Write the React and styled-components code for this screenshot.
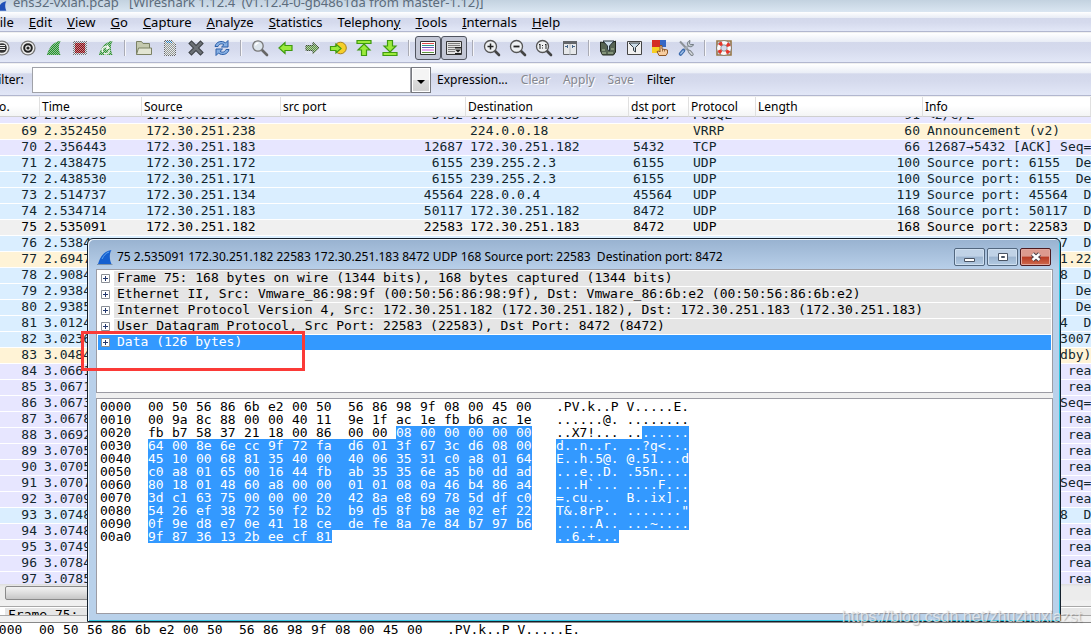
import styled, { createGlobalStyle, css } from "styled-components";

const ui = `"Noto Sans", "Open Sans", sans-serif`;
const mono = `"DejaVu Sans Mono", "Liberation Mono", monospace`;

const GlobalStyle = createGlobalStyle`
  * {
    box-sizing: border-box;
  }
  body {
    margin: 0;
    font-family: ${ui};
    font-size: 12px;
    color: #000;
  }
  button, input {
    font: inherit;
    color: inherit;
  }
`;

const Desktop = styled.div`
  position: relative;
  height: 100vh;
  overflow: hidden;
`;
const Defs = styled.svg`
  display: block;
`;
/* the main window hangs a little over the left screen edge */
const MainWindow = styled.div`
  display: flex;
  flex-direction: column;
  height: 100%;
  margin-left: -12px;
  background: #f0f0f0;
`;
const TitleBar = styled.header`
  display: flex;
  align-items: flex-end;
  gap: 5px;
  height: 12px;
  padding-left: 8px;
  flex: none;
  overflow: hidden;
  color: #5c6c7c;
  font-size: 13px;
  line-height: 20px;
  white-space: pre;
  background: linear-gradient(#c3d2e0, #dae6f2);
`;
const strip = css`
  display: flex;
  align-items: center;
  flex: none;
  margin-bottom: 1px;
  border-bottom: 1px solid #b2b7cf;
  background: linear-gradient(
    #fff 0%,
    #e9edf6 30%,
    #d3d8eb 31%,
    #d5daed 55%,
    #e2e7f7 100%
  );
`;
const MenuBar = styled.nav`
  ${strip}
  gap: 15px;
  height: 20px;
  padding-left: 5px;
`;
const MenuItem = styled.button`
  padding: 0;
  border: 0;
  background: none;
  font-size: 13px;
  line-height: 18px;
`;
const ToolBar = styled.div`
  ${strip}
  height: 30px;
  padding: 1px 0 0 1px;
`;
const ToolButton = styled.button`
  display: flex;
  align-items: center;
  justify-content: center;
  width: 26px;
  height: 24px;
  flex: none;
  padding: 0;
  border: 1px solid ${(p) => (p.$on ? "#50545f" : "transparent")};
  border-radius: 3px;
  background: ${(p) => (p.$on ? "#c3c7d6" : "none")};
`;
const Separator = styled.div`
  width: 1px;
  height: 16px;
  margin: 0 6px 0 5px;
  background: #a9abb5;
  box-shadow: 1px 0 #f6f6fa;
`;
const FilterBar = styled.div`
  ${strip}
  height: 32px;
  padding-left: 4px;
`;
const FilterLabel = styled.label`
  width: 40px;
`;
const ComboBox = styled.div`
  display: flex;
  width: 399px;
  height: 26px;
  margin-right: 6px;
`;
const FilterInput = styled.input`
  flex: 1;
  min-width: 0;
  border: 1px solid #a0a2a8;
  background: #fff;
`;
const DropButton = styled.button`
  width: 20px;
  padding: 0;
  border: 1px solid #77797f;
  box-shadow: inset 0 0 0 1px #fff;
  background: linear-gradient(#f4f4f4 50%, #dcdcdc 51%, #d0d0d0);
`;
const FilterButton = styled.button`
  margin-right: 13px;
  padding: 0;
  border: 0;
  background: none;
  &:disabled {
    color: #85878f;
    text-shadow: 1px 1px #fff;
  }
`;

const PacketPane = styled.main`
  flex: 1;
  min-height: 0;
  overflow: hidden;
  background: #fff;
`;
const PacketTable = styled.table`
  width: 100%;
  table-layout: fixed;
  border-collapse: separate;
  border-spacing: 0;
  font-family: ${mono};
  font-size: 13px;
  line-height: 14px;
`;
const Col = styled.col`
  width: ${(p) => (p.$w ? p.$w + "px" : "auto")};
`;
const HeadCell = styled.th`
  height: 20px;
  padding: 0 0 0 2px;
  overflow: hidden;
  border-right: 1px solid #e0e0e0;
  border-bottom: 1px solid #cfcfcf;
  background: linear-gradient(#fff 45%, #f3f4f5);
  font-family: ${ui};
  font-size: 12px;
  font-weight: 400;
  line-height: 19px;
  text-align: left;
`;
const rowColors = {
  udp: "#daeeff",
  tcp: "#e7e6ff",
  arp: "#fff3d6",
  current: "#f0f0f0",
};
const PacketRow = styled.tr`
  background: ${(p) => rowColors[p.$kind]};
  color: ${(p) => (p.$kind === "current" ? "#000" : "#12272e")};
`;
const Cell = styled.td`
  padding: 0 3px 0 4px;
  overflow: hidden;
  border-bottom: 1px solid #fff;
  white-space: pre;
  &:last-child {
    padding-right: 0;
  }
`;
const CellText = styled.div`
  display: flex;
  align-items: flex-end;
  justify-content: ${(p) => (p.$right ? "flex-end" : "flex-start")};
  height: ${(p) => (p.$clipped ? "6px" : "15px")};
  padding-bottom: 1px;
  overflow: hidden;
`;
const ScrollStrip = styled.div`
  height: 22px;
  flex: none;
  padding: 2px 40px 5px 17px;
  background: linear-gradient(#dedede, #ececec 3px, #ececec 16px, #f0f0f0 17px);
`;
const ScrollThumb = styled.div`
  height: 14px;
  border: 1px solid #8a8a8a;
  border-radius: 2px;
  background: linear-gradient(#f2f2f2, #dedede 50%, #c6c6c6);
`;
const MainTree = styled.section`
  height: 10px;
  flex: none;
  padding: 1px 0 0 17px;
  overflow: hidden;
  border: solid #a8a8a8;
  border-width: 1px 0;
  background: #fff;
  font-family: ${mono};
  font-size: 13px;
  line-height: 14px;
`;
const MainTreeRow = styled.div`
  padding-left: 3px;
  background: #e6e6e6;
`;
const MainHex = styled.section`
  height: 13px;
  flex: none;
  margin-top: 6px;
  padding-left: 3px;
  border-top: 1px solid #888;
  background: #fff;
`;

const Dialog = styled.section`
  position: absolute;
  top: 238px;
  left: 87px;
  right: 30px;
  padding: 1px 7px 7px 8px;
  border: 1px solid #14202c;
  border-radius: 6px 6px 0 0;
  box-shadow: inset 1px 1px #eef5fc, inset -1px -1px #2fc6e0;
  background: linear-gradient(#98b2d0, #b9d0ea 31px, #b9d1ea);
`;
const DialogTitle = styled.header`
  display: flex;
  align-items: center;
  gap: 3px;
  height: 29px;
  padding-top: 4px;
`;
const DialogName = styled.h1`
  flex: 1;
  margin: 0;
  font-size: 12px;
  font-weight: 400;
  white-space: pre;
`;
const WindowButtons = styled.div`
  display: flex;
  gap: 2px;
  padding-right: 2px;
`;
const WindowButton = styled.button`
  display: flex;
  align-items: center;
  justify-content: center;
  width: 31px;
  height: 18px;
  padding: 0;
  border: 1px solid ${(p) => (p.$close ? "#4d1a20" : "#52677f")};
  border-radius: 2px;
  box-shadow: inset 0 0 0 1px ${(p) => (p.$close ? "#e2a79d" : "#cfdff0")};
  background: ${(p) =>
    p.$close
      ? "linear-gradient(#dc9a8e 45%, #b83a22 50%, #cf6a4e)"
      : "linear-gradient(#c0d2e6 45%, #9cb4cf 50%, #b3cae2)"};
`;
const Panes = styled.div`
  display: grid;
  gap: 5px;
  background: #f0f0f0;
`;
const Tree = styled.ul`
  min-height: 124px;
  margin: 0;
  padding: 1px;
  list-style: none;
  border: 1px solid #9c9ca4;
  background: #fff;
  font-family: ${mono};
  font-size: 13px;
  line-height: 14px;
  white-space: pre;
`;
const TreeItem = styled.li`
  display: flex;
  align-items: center;
  border-bottom: 1px solid #fff;
  color: ${(p) => (p.$selected ? "#fff" : "#000")};
  background: ${(p) => (p.$selected ? "#3399ff" : "#fff")};
`;
const Expander = styled.button`
  display: flex;
  margin: 0 4px 0 3px;
  padding: 0;
  border: 0;
  background: none;
`;
const TreeText = styled.span`
  flex: 1;
  padding: 0 0 1px 3px;
  background: ${(p) => (p.$selected ? "#3399ff" : "#e5e5e5")};
`;
const HexPane = styled.div`
  min-height: 216px;
  padding: 1px 3px;
  border: 1px solid #9c9ca4;
  background: #fff;
`;
const HexLine = styled.div`
  display: grid;
  grid-template-columns: 48px 408px 1fr;
  height: 13px;
  font-family: ${mono};
  font-size: 13px;
  line-height: 13px;
  white-space: pre;
`;
const Bytes = styled.div`
  display: flex;
`;
const marked = css`
  color: #fff;
  background: #3399ff;
`;
const Byte = styled.span`
  width: 24px;
  ${(p) => p.$marked && marked}
  &:nth-child(8) {
    width: 32px;
  }
  &:last-child {
    width: 16px;
  }
`;
const Ascii = styled.div`
  display: flex;
`;
const AsciiPart = styled.span`
  ${(p) => p.$marked && marked}
`;
const Highlight = styled.div`
  position: absolute;
  top: 331px;
  left: 81px;
  width: 224px;
  height: 40px;
  border: 3px solid #fb3a37;
`;
const Watermark = styled.div`
  position: absolute;
  right: 9px;
  bottom: 9px;
  color: rgba(240, 240, 240, 0.75);
  font-family: "Liberation Sans", Arial, sans-serif;
  font-size: 16px;
  line-height: 18px;
  text-shadow: 1px 1px 1px rgba(90, 90, 90, 0.4);
`;

const Svg = ({ children, size = 18 }) => (
  <svg width={size} height={size} viewBox="0 0 18 18" aria-hidden="true">
    {children}
  </svg>
);

const Lens = ({ children }) => (
  <Svg>
    <path d="M12 12l4 4" stroke="#444" strokeWidth="2.6" strokeLinecap="round" />
    <circle cx="7.5" cy="7.5" r="6" fill="#eef0f2" stroke="#555" strokeWidth="1.3" />
    {children}
  </Svg>
);

const Circle = ({ children }) => (
  <Svg>
    <circle cx="9" cy="9" r="7.6" fill="#777" />
    <circle cx="9" cy="9" r="6.3" fill="#eee" />
    {children}
  </Svg>
);

const fin = "M2 16C4 9 8 3 15.5 2C13 6 13.5 12 15.5 16Z";
const arrow = "M2 9l6-5.5v3h7v5H8v3z";
const green = { fill: "#9bea3c", stroke: "#3f9a10", strokeWidth: 1.2 };

const icons = {
  interfaces: (
    <Circle>
      <circle cx="9" cy="9" r="4.8" fill="#333" />
      <path d="M6 6.5h6M6 8.5h6M6 10.5h6" stroke="#eee" />
    </Circle>
  ),
  options: (
    <Circle>
      <circle cx="9" cy="9" r="3.8" fill="#eee" stroke="#222" strokeWidth="2" />
      <circle cx="9" cy="9" r="1.6" fill="#222" />
    </Circle>
  ),
  start: (
    <Svg>
      <path d={fin} fill="#1f8a24" />
      <path d={fin} fill="url(#dither)" />
      <path d={fin} fill="#2c9a30" opacity=".45" />
    </Svg>
  ),
  stop: (
    <Svg>
      <path d="M2 2h14v14H2z" fill="#777" />
      <path d="M4 4h10v10H4z" fill="#930d12" />
      <path d="M2 2h14v14H2z" fill="url(#dither)" />
      <path d="M4 4h10v10H4z" fill="#930d12" opacity=".45" />
    </Svg>
  ),
  restart: (
    <Svg>
      <path d={fin} fill="#2f8a30" />
      <path d={fin} fill="url(#dither)" />
      <path d={fin} fill="#2c9a30" opacity=".4" />
      <path d="M6 13a3 3 0 0 1 5-4M12 11a3 3 0 0 1-5 3M10 6l2 3-3 1" fill="none" stroke="#f2f5f0" strokeWidth="1.4" />
    </Svg>
  ),
  open: (
    <Svg>
      <path d="M1.5 15.5v-13h5l1.5 2h6.5v5" fill="#c4c9ae" stroke="#7b8164" />
      <path d="M1.5 15.5l2-6.5h13v6.5z" fill="#e2e5d3" stroke="#7b8164" />
    </Svg>
  ),
  save: (
    <Svg>
      <path d="M3.5 1.5h8l3 3v12h-11z" fill="#989c8e" stroke="#666" />
      <path d="M5 3h6" stroke="#2480b8" strokeWidth="2" />
      <path d="M3 1h12v16H3z" fill="url(#dither)" />
    </Svg>
  ),
  close: (
    <Svg>
      <path d="M4.5 4.5l9 9M13.5 4.5l-9 9" stroke="#3e4247" strokeWidth="4.6" strokeLinecap="square" />
      <path d="M4.5 4.5l9 9M13.5 4.5l-9 9" stroke="#6b7075" strokeWidth="2.6" strokeLinecap="square" />
    </Svg>
  ),
  reload: (
    <Svg>
      <path d="M2 7.5c1-5 7-6.5 10.5-3.5L15 1.5V8H8.500L11 5.7C8.5 4 6 5 5 7.5zM16 10.5c-1 5-7 6.5-10.5 3.5L3 16.5V10h6.5L7 12.3c2.5 1.7 5 .7 6-1.8z" fill="#85aee2" stroke="#2c5fa8" />
    </Svg>
  ),
  find: (
    <Svg>
      <path d="M11 11l5 5" stroke="#666" strokeWidth="2.6" strokeLinecap="round" />
      <circle cx="7" cy="7" r="5.2" fill="#dde5ec" stroke="#777" strokeWidth="1.3" />
      <path d="M4.5 6.5a3 3 0 0 1 3-2.5" stroke="#fff" fill="none" strokeWidth="1.5" />
    </Svg>
  ),
  back: (
    <Svg>
      <path d={arrow} {...green} />
    </Svg>
  ),
  forward: (
    <Svg>
      <path d="M16 9l-6-5.5v3H3v5h7v3z" fill="#4f8a2c" stroke="#3c5232" />
      <path d="M2 3h15v12H2z" fill="url(#dither)" />
      <path d="M16 9l-6-5.5v3H3v5h7v3z" fill="#6fa350" stroke="#3c5232" opacity=".4" />
    </Svg>
  ),
  goto: (
    <Svg>
      <circle cx="11.5" cy="9" r="5.8" fill="#f5cf2a" stroke="#a98218" />
      <path d="M12 9.5L7 5v2.5H1.5v4H7V14z" {...green} />
    </Svg>
  ),
  first: (
    <Svg>
      <path d="M2 1.5h14v3H2zM9 5l6 6h-3.5v5.5h-5V11H3z" {...green} />
    </Svg>
  ),
  last: (
    <Svg>
      <path d="M2 13.5h14v3H2zM9 13l6-6h-3.5V1.5h-5V7H3z" {...green} />
    </Svg>
  ),
  colorize: (
    <Svg>
      <path d="M1.5 2.5h15v13h-15z" fill="#fff" stroke="#333" />
      <path d="M3 4.5h12" stroke="#dd4a4a" />
      <path d="M3 6.5h12" stroke="#2f958e" />
      <path d="M3 8.5h12" stroke="#6a5ab8" />
      <path d="M3 11h12" stroke="#e8a9ed" strokeWidth="2" />
      <path d="M3 13.5h12" stroke="#5f9440" />
    </Svg>
  ),
  autoscroll: (
    <Svg>
      <path d="M1.5 2.5h15v13h-15z" fill="#e2e2e2" stroke="#333" />
      <path d="M3 4.5h12M3 6.5h12M3 8.5h12M3 10.5h7M3 12.5h7" stroke="#7b7b7b" />
      <path d="M10 8h6v1.5h-6zM10 10.5h6l-3 3zM10 14h6v1.5h-6z" fill="#222" />
    </Svg>
  ),
  zoomIn: (
    <Lens>
      <path d="M4.5 7.5h6M7.5 4.5v6" stroke="#222" strokeWidth="1.5" />
    </Lens>
  ),
  zoomOut: (
    <Lens>
      <path d="M4.5 7.5h6" stroke="#222" strokeWidth="1.8" />
    </Lens>
  ),
  zoomReset: (
    <Lens>
      <path d="M4 6l1-1v5M10 6l1-1v5M7.5 6v1M7.5 8.5v1" stroke="#222" fill="none" />
    </Lens>
  ),
  resize: (
    <Svg>
      <path d="M2.5 2.5h13v13h-13z" fill="#e6e8ea" stroke="#63666a" />
      <path d="M2 3.5h14" stroke="#63666a" strokeWidth="3" />
      <path d="M9 5v11" stroke="#b6bbc0" />
      <path d="M4 7.5h3M11 7.5h3M6.5 6v3M11.5 6v3" stroke="#456589" />
    </Svg>
  ),
  capFilter: (
    <Svg>
      <path d="M1.5 3l5 1h6l4-2v11l-2 3h-11l-2-4z" fill="#566453" stroke="#22281f" />
      <path d="M3 14h4M9 14h5M3 11h3M12 10h3" stroke="#93a286" strokeWidth="1.5" />
      <path d="M4 2h11L10.5 7v5l-2-1.500V7z" fill="#cbdce9" stroke="#29343d" />
    </Svg>
  ),
  dispFilter: (
    <Svg>
      <path d="M2.5 2.5h14v13h-14z" fill="#f0f0f0" stroke="#444" />
      <path d="M4 4h11L10.5 8.5v4.5l-2-1.5v-3z" fill="#cbdce9" stroke="#30383f" />
    </Svg>
  ),
  colorRules: (
    <Svg>
      <path d="M1 1h8v7H1z" fill="#d42c24" />
      <path d="M9 1h6v7H9z" fill="#3567c5" />
      <path d="M1 8h8v6H1z" fill="#f6cf24" />
      <path d="M8 16.5l-2-4 2-.5 1 1V6.5h2V10l5.5 1v3l-1.5 2.500z" fill="#f7cda0" stroke="#8d5727" />
      <path d="M11.5 10v2.5M13.5 10.5v2" stroke="#8d5727" strokeWidth=".8" />
    </Svg>
  ),
  prefs: (
    <Svg>
      <path d="M3 2.5l8.5 9" stroke="#8c9298" strokeWidth="2" />
      <path d="M12.5 12.5l2.5 2.8" stroke="#80868c" strokeWidth="3.4" strokeLinecap="round" />
      <path d="M12.5 12.5l2.5 2.8" stroke="#d5dade" strokeWidth="1.4" strokeLinecap="round" />
      <path d="M12 6L5 13" stroke="#a4acb3" strokeWidth="2" />
      <path d="M13 1.5c-2 .5-3.5 3-2 5s5 1.5 5.5-1l-3 .2-1-1.4z" fill="#c6ced4" stroke="#6e777e" />
      <path d="M6.5 11.5L3.5 15" stroke="#3a69ad" strokeWidth="3.6" strokeLinecap="round" />
      <path d="M6.2 12L3.8 14.7" stroke="#9cbde6" strokeWidth="1.5" strokeLinecap="round" />
    </Svg>
  ),
  help: (
    <Svg>
      <path d="M2 2h14v14H2z" fill="none" stroke="#967748" strokeWidth="1.6" />
      <circle cx="9" cy="9" r="5.2" fill="none" stroke="#777" strokeWidth="4.8" />
      <circle cx="9" cy="9" r="5.2" fill="none" stroke="#fafafa" strokeWidth="3.6" />
      <circle cx="9" cy="9" r="5.2" fill="none" stroke="#e5352b" strokeWidth="3.6" strokeDasharray="3.2 4.968" strokeDashoffset="-2.484" />
    </Svg>
  ),
};

const toolGroups = [
  ["interfaces", "options", "start", "stop", "restart"],
  ["open", "save", "close", "reload"],
  ["find", "back", "forward", "goto", "first", "last"],
  ["colorize", "autoscroll"],
  ["zoomIn", "zoomOut", "zoomReset", "resize"],
  ["capFilter", "dispFilter", "colorRules", "prefs"],
  ["help"],
];
const pressed = ["colorize", "autoscroll"];

/* [text, index of the underlined letter] */
const menus = [
  ["File", 0],
  ["Edit", 0],
  ["View", 0],
  ["Go", 0],
  ["Capture", 0],
  ["Analyze", 0],
  ["Statistics", 0],
  ["Telephony", 8],
  ["Tools", 0],
  ["Internals", 0],
  ["Help", 0],
];

const columns = [
  ["No.", 52],
  ["Time", 102],
  ["Source", 139],
  ["src port", 185],
  ["Destination", 163],
  ["dst port", 60],
  ["Protocol", 67],
  ["Length", 167],
  ["Info"],
];
const rightAligned = [0, 3, 7];

const udp = (port) => `Source port: ${port}  Destination port: 8472`;
const seg = "[TCP segment of a reassembled PDU]";
const ack = "5432→12687 [ACK] Seq=";
const A = "172.30.251.182";
const B = "172.30.251.183";
/* rows that only have a number, a time and an info text */
const brief = (kind, no, time, info) => [kind, no, time, "", "", "", "", "", "", info];

const packets = [
  ["tcp", 68, "2.316996", A, "5432", B, "12687", "PGSQL", 91, "<2/C/Z"],
  ["arp", 69, "2.352450", "172.30.251.238", "", "224.0.0.18", "", "VRRP", 60, "Announcement (v2)"],
  ["tcp", 70, "2.356443", B, "12687", A, "5432", "TCP", 66, "12687→5432 [ACK] Seq="],
  ["udp", 71, "2.438475", "172.30.251.172", "6155", "239.255.2.3", "6155", "UDP", 100, udp(6155)],
  ["udp", 72, "2.438530", "172.30.251.171", "6155", "239.255.2.3", "6155", "UDP", 100, udp(6155)],
  ["udp", 73, "2.514737", "172.30.251.134", "45564", "228.0.0.4", "45564", "UDP", 119, udp(45564)],
  ["udp", 74, "2.534714", B, "50117", A, "8472", "UDP", 168, udp(50117)],
  ["current", 75, "2.535091", A, "22583", B, "8472", "UDP", 168, udp(22583)],
  brief("udp", 76, "2.5384", udp(50117)),
  brief("arp", 77, "2.6947", "Who has 172.30.251.22"),
  brief("udp", 78, "2.9084", udp(37498)),
  brief("udp", 79, "2.9384", udp(6155)),
  brief("udp", 80, "2.9385", udp(6155)),
  brief("udp", 81, "3.0124", udp(45564)),
  brief("udp", 82, "3.0236", "Standard query: 23007"),
  brief("arp", 83, "3.0484", "Hello (state Standby)"),
  brief("tcp", 84, "3.0661", seg),
  brief("tcp", 85, "3.0671", seg),
  brief("tcp", 86, "3.0673", ack),
  brief("tcp", 87, "3.0678", seg),
  brief("tcp", 88, "3.0692", seg),
  brief("tcp", 89, "3.0705", seg),
  brief("tcp", 90, "3.0705", seg),
  brief("tcp", 91, "3.0707", ack),
  brief("tcp", 92, "3.0709", seg),
  brief("udp", 93, "3.0748", udp(37498)),
  brief("tcp", 94, "3.0748", seg),
  brief("tcp", 95, "3.0749", seg),
  brief("tcp", 96, "3.0784", seg),
  brief("tcp", 97, "3.0785", seg),
];

const layers = [
  "Frame 75: 168 bytes on wire (1344 bits), 168 bytes captured (1344 bits)",
  "Ethernet II, Src: Vmware_86:98:9f (00:50:56:86:98:9f), Dst: Vmware_86:6b:e2 (00:50:56:86:6b:e2)",
  "Internet Protocol Version 4, Src: 172.30.251.182 (172.30.251.182), Dst: 172.30.251.183 (172.30.251.183)",
  "User Datagram Protocol, Src Port: 22583 (22583), Dst Port: 8472 (8472)",
  "Data (126 bytes)",
];

/* the Data layer starts at this byte of the frame */
const dataStart = 42;
const dump = [
  ["0000", "00 50 56 86 6b e2 00 50 56 86 98 9f 08 00 45 00", ".PV.k..P V.....E."],
  ["0010", "00 9a 8c 88 00 00 40 11 9e 1f ac 1e fb b6 ac 1e", "......@. ........"],
  ["0020", "fb b7 58 37 21 18 00 86 00 00 08 00 00 00 00 00", "..X7!... ........"],
  ["0030", "64 00 8e 6e cc 9f 72 fa d6 01 3f 67 3c d6 08 00", "d..n..r. ..?g<..."],
  ["0040", "45 10 00 68 81 35 40 00 40 06 35 31 c0 a8 01 64", "E..h.5@. @.51...d"],
  ["0050", "c0 a8 01 65 00 16 44 fb ab 35 35 6e a5 b0 dd ad", "...e..D. .55n...."],
  ["0060", "80 18 01 48 60 a8 00 00 01 01 08 0a 46 b4 86 a4", "...H`... ....F..."],
  ["0070", "3d c1 63 75 00 00 00 20 42 8a e8 69 78 5d df c0", "=.cu...  B..ix].."],
  ["0080", "54 26 ef 38 72 50 f2 b2 b9 d5 8f b8 ae 02 ef 22", 'T&.8rP.. ......."'],
  ["0090", "0f 9e d8 e7 0e 41 18 ce de fe 8a 7e 84 b7 97 b6", ".....A.. ...~...."],
  ["00a0", "9f 87 36 13 2b ee cf 81", "..6.+..."],
];

const Menu = ({ text, at }) => (
  <MenuItem type="button">
    {text.slice(0, at)}
    <u>{text[at]}</u>
    {text.slice(at + 1)}
  </MenuItem>
);

const Packet = ({ packet, clipped }) => {
  const [kind, ...cells] = packet;
  return (
    <PacketRow $kind={kind}>
      {cells.map((value, i) => (
        <Cell key={i}>
          <CellText $right={rightAligned.includes(i)} $clipped={clipped}>
            {value}
          </CellText>
        </Cell>
      ))}
    </PacketRow>
  );
};

const HexRow = ({ row, markFrom = Infinity }) => {
  const [offset, hex, ascii] = row;
  const first = parseInt(offset, 16);
  /* bytes of this row before the marked range, and their ascii length */
  const plain = Math.max(0, Math.min(16, markFrom - first));
  const split = plain > 7 ? plain + 1 : plain;
  return (
    <HexLine>
      <span>{offset}</span>
      <Bytes>
        {hex.split(" ").map((byte, i) => (
          <Byte key={i} $marked={i >= plain}>
            {byte}
          </Byte>
        ))}
      </Bytes>
      <Ascii>
        <AsciiPart>{ascii.slice(0, split)}</AsciiPart>
        <AsciiPart $marked>{ascii.slice(split)}</AsciiPart>
      </Ascii>
    </HexLine>
  );
};

const App = () => {
  return (
    <Desktop>
      <GlobalStyle />
      <Defs width="0" height="0">
        <defs>
          <pattern id="dither" width="2" height="2" patternUnits="userSpaceOnUse">
            <path d="M0 0h1v1H0zM1 1h1v1H1z" fill="#e4e7f2" />
          </pattern>
        </defs>
      </Defs>
      <MainWindow>
        <TitleBar>
          <Svg size={12}>
            <path d={fin} fill="#1f50b8" />
          </Svg>
          <span>
            ens32-vxlan.pcap   [Wireshark 1.12.4  (v1.12.4-0-gb4861da from
            master-1.12)]
          </span>
        </TitleBar>
        <MenuBar>
          {menus.map(([text, at]) => (
            <Menu key={text} text={text} at={at} />
          ))}
        </MenuBar>
        <ToolBar>
          {toolGroups.map((group, i) => [
            i > 0 && <Separator key={"sep" + i} />,
            ...group.map((name) => (
              <ToolButton key={name} type="button" aria-label={name} $on={pressed.includes(name)}>
                {icons[name]}
              </ToolButton>
            )),
          ])}
        </ToolBar>
        <FilterBar>
          <FilterLabel htmlFor="filter">Filter:</FilterLabel>
          <ComboBox>
            <FilterInput id="filter" type="text" />
            <DropButton type="button" aria-label="Recent filters">
              <svg width="8" height="4" viewBox="0 0 8 4">
                <path d="M0 0h8L4 4z" />
              </svg>
            </DropButton>
          </ComboBox>
          <FilterButton type="button">Expression...</FilterButton>
          <FilterButton type="button" disabled>Clear</FilterButton>
          <FilterButton type="button" disabled>Apply</FilterButton>
          <FilterButton type="button" disabled>Save</FilterButton>
          <FilterButton type="button">Filter</FilterButton>
        </FilterBar>
        <PacketPane>
          <PacketTable>
            <colgroup>
              {columns.map(([name, w]) => (
                <Col key={name} $w={w} />
              ))}
            </colgroup>
            <thead>
              <tr>
                {columns.map(([name]) => (
                  <HeadCell key={name}>{name}</HeadCell>
                ))}
              </tr>
            </thead>
            <tbody>
              {packets.map((packet, i) => (
                <Packet key={packet[1]} packet={packet} clipped={i === 0} />
              ))}
            </tbody>
          </PacketTable>
        </PacketPane>
        <ScrollStrip>
          <ScrollThumb />
        </ScrollStrip>
        <MainTree>
          <MainTreeRow>Frame 75:</MainTreeRow>
        </MainTree>
        <MainHex>
          <HexRow row={dump[0]} />
        </MainHex>
      </MainWindow>

      <Dialog>
        <DialogTitle>
          <Svg>
            <path d={fin} fill="#1660cf" />
            <path d="M6 11C8 7 10 5 13 4" stroke="#5aa2f0" fill="none" />
            <path d="M1 16.5h15.5" stroke="#7f93a8" />
          </Svg>
          <DialogName>
            75 2.535091 172.30.251.182 22583 172.30.251.183 8472 UDP 168 Source
            port: 22583  Destination port: 8472
          </DialogName>
          <WindowButtons>
            <WindowButton type="button" aria-label="Minimize">
              <svg width="12" height="12" viewBox="0 0 12 12">
                <path d="M.5 7.5h10v3H.5z" fill="#fff" stroke="#4a5464" />
              </svg>
            </WindowButton>
            <WindowButton type="button" aria-label="Maximize">
              <svg width="12" height="12" viewBox="0 0 12 12">
                <path d="M1.5 2.5h9v7h-9z" fill="#fff" stroke="#4a5464" />
                <path d="M4.5 5.5h3v1h-3z" fill="#8fa5bf" stroke="#4a5464" />
              </svg>
            </WindowButton>
            <WindowButton type="button" aria-label="Close" $close>
              <svg width="12" height="12" viewBox="0 0 12 12">
                <path d="M2.5 3l7 6M9.5 3l-7 6" stroke="#4a4048" strokeWidth="4.4" />
                <path d="M2.5 3l7 6M9.5 3l-7 6" stroke="#fff" strokeWidth="2.4" />
              </svg>
            </WindowButton>
          </WindowButtons>
        </DialogTitle>
        <Panes>
          <Tree>
            {layers.map((text, i) => {
              const selected = i === layers.length - 1;
              return (
                <TreeItem key={text} $selected={selected}>
                  <Expander type="button" aria-label="Expand">
                    <svg width="9" height="9" viewBox="0 0 9 9">
                      <path d="M.5.5h8v8h-8z" fill="#fff" stroke="#8a8f96" />
                      <path d="M2 4.5h5M4.5 2v5" stroke="#24386e" />
                    </svg>
                  </Expander>
                  <TreeText $selected={selected}>{text}</TreeText>
                </TreeItem>
              );
            })}
          </Tree>
          <HexPane>
            {dump.map((row) => (
              <HexRow key={row[0]} row={row} markFrom={dataStart} />
            ))}
          </HexPane>
        </Panes>
      </Dialog>
      <Highlight />
      <Watermark>https://blog.csdn.net/zhuzhuxiazst</Watermark>
    </Desktop>
  );
};

export default App;
